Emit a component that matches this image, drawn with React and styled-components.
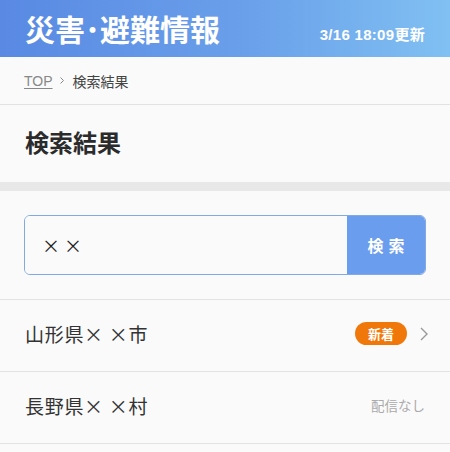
import React from "react";
import styled, { createGlobalStyle } from "styled-components";

const Global = createGlobalStyle`
  html, body { margin: 0; padding: 0; background: #fafafa; }
  body { font-family: "Noto Sans CJK JP", "Noto Sans", sans-serif; color: #333; }
`;

const Page = styled.div`
  width: 450px;
  background: #fafafa;
`;

const Header = styled.header`
  height: 57px;
  display: flex;
  align-items: center;
  justify-content: space-between;
  padding: 0 25px;
  box-sizing: border-box;
  background: linear-gradient(90deg, #5989e3 0%, #6aa0ea 55%, #80c0f2 100%);
  color: #fff;
`;

const Title = styled.h1`
  margin: 0 0 2px;
  font-size: 30px;
  font-weight: 700;
  line-height: 1;
`;

const Updated = styled.div`
  font-size: 15px;
  font-weight: 700;
  line-height: 1;
  margin-top: 11px;
  letter-spacing: 0.3px;
  font-family: "Liberation Sans", "Noto Sans CJK JP", sans-serif;
`;

const Crumbs = styled.nav`
  height: 47px;
  display: flex;
  align-items: center;
  padding: 0 25px 0 24px;
  border-bottom: 1px solid #e2e2e2;
  font-size: 14px;
  line-height: 1;
  color: #444;
`;

const CrumbLink = styled.a`
  color: #888;
  text-decoration: underline;
  text-underline-offset: 2px;
  font-family: "Liberation Sans", sans-serif;
`;

const Sep = styled.svg`
  margin: 0 9px 0 7px;
`;

const Heading = styled.h2`
  margin: 0;
  height: 77px;
  display: flex;
  align-items: center;
  padding: 0 25px 4px;
  box-sizing: border-box;
  font-size: 24px;
  line-height: 1;
  font-weight: 700;
  color: #2b2b2b;
`;

const Band = styled.div`
  height: 9px;
  background: #e8e8e8;
`;

const SearchArea = styled.div`
  padding: 24px;
  border-bottom: 1px solid #e2e2e2;
`;

const SearchBox = styled.form`
  display: flex;
  height: 60px;
  border: 1px solid #82a9e2;
  border-radius: 6px;
  overflow: hidden;
  box-sizing: border-box;
`;

const Input = styled.input`
  flex: 1;
  min-width: 0;
  border: none;
  outline: none;
  background: #fafafa;
  padding: 0 17px;
  font-size: 18px;
  color: #222;
  font-family: "Noto Sans CJK JP", sans-serif;
`;

const Button = styled.button`
  width: 78px;
  border: none;
  background: #6a9ded;
  color: #fff;
  font-size: 16px;
  font-weight: 700;
  letter-spacing: 5px;
  padding: 0 0 0 5px;
  font-family: "Noto Sans CJK JP", sans-serif;
`;

const Row = styled.div`
  height: 72px;
  display: flex;
  align-items: center;
  padding: 0 22px 4px 25px;
  border-bottom: 1px solid #e2e2e2;
  box-sizing: border-box;
`;

const Name = styled.div`
  flex: 1;
  font-size: 19px;
  line-height: 1;
  letter-spacing: 0.7px;
  color: #333;
`;

const Badge = styled.span`
  display: inline-flex;
  align-items: center;
  justify-content: center;
  width: 52px;
  height: 23px;
  border-radius: 12px;
  background: #f0780a;
  color: #fff;
  font-size: 13px;
  line-height: 1;
  font-weight: 700;
`;

const Chevron = styled.svg`
  margin-left: 13px;
`;

const Muted = styled.span`
  font-size: 13.5px;
  line-height: 1;
  color: #aaa;
  margin-right: 3px;
`;

export default function App() {
  return (
    <Page>
      <Global />
      <Header>
        <Title>災害･避難情報</Title>
        <Updated>3/16 18:09更新</Updated>
      </Header>
      <Crumbs>
        <CrumbLink>TOP</CrumbLink>
        <Sep width="4" height="7" viewBox="0 0 4 7">
          <path d="M0.5 0.5l3 3-3 3" fill="none" stroke="#888" strokeWidth="1" />
        </Sep>
        <span>検索結果</span>
      </Crumbs>
      <Heading>検索結果</Heading>
      <Band />
      <SearchArea>
        <SearchBox onSubmit={(e) => e.preventDefault()}>
          <Input defaultValue="× ×" />
          <Button type="submit">検索</Button>
        </SearchBox>
      </SearchArea>
      <Row>
        <Name>山形県× ×市</Name>
        <Badge>新着</Badge>
        <Chevron width="8" height="14" viewBox="0 0 8 14">
          <path d="M1 1l6 6-6 6" fill="none" stroke="#999" strokeWidth="1.4" />
        </Chevron>
      </Row>
      <Row>
        <Name>長野県× ×村</Name>
        <Muted>配信なし</Muted>
      </Row>
    </Page>
  );
}
